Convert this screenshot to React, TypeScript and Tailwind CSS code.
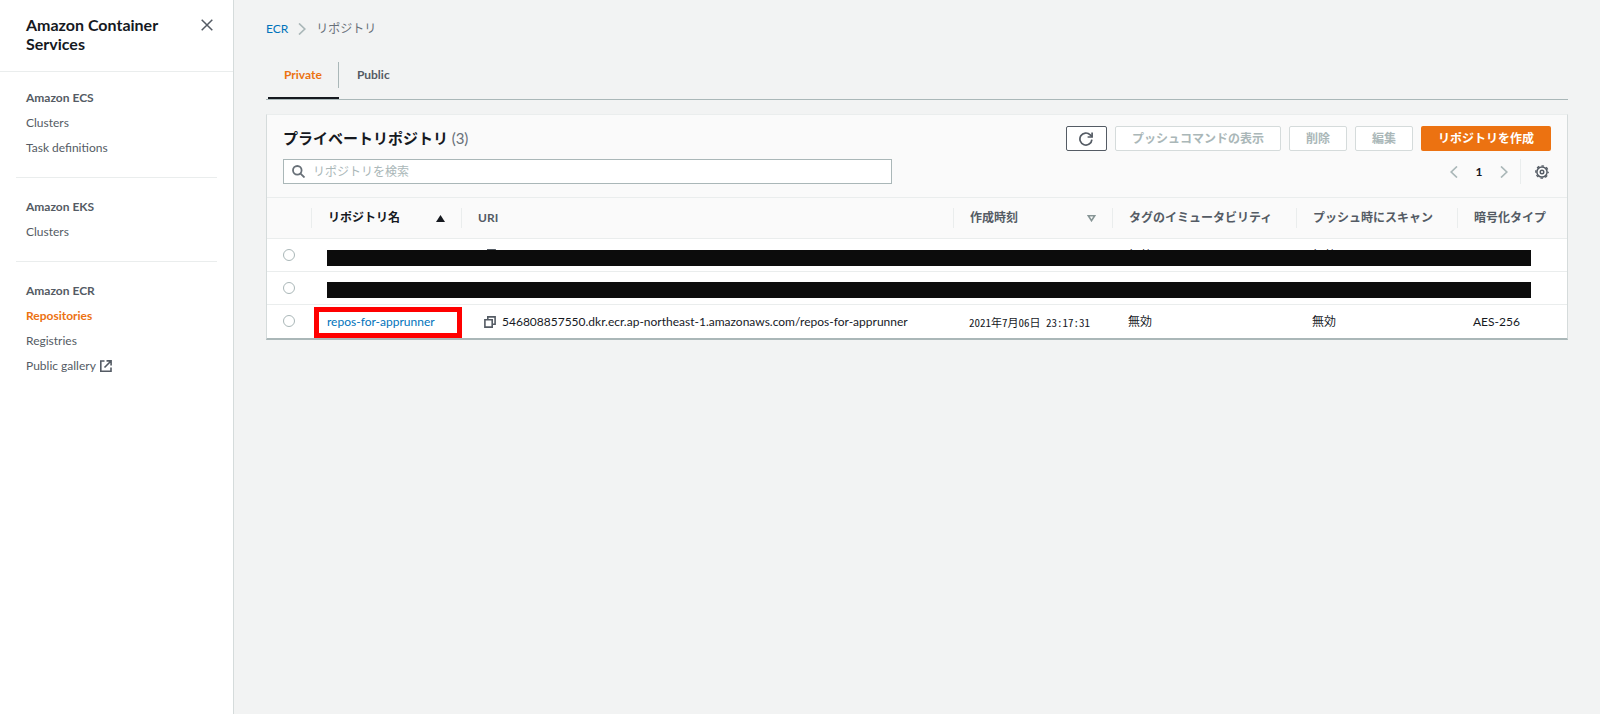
import type { ReactNode } from "react";

type NavItem = { label: string; active?: boolean; external?: boolean };
type NavSection = { title: string; items: NavItem[] };

const sections: NavSection[] = [
  { title: "Amazon ECS", items: [{ label: "Clusters" }, { label: "Task definitions" }] },
  { title: "Amazon EKS", items: [{ label: "Clusters" }] },
  {
    title: "Amazon ECR",
    items: [
      { label: "Repositories", active: true },
      { label: "Registries" },
      { label: "Public gallery", external: true },
    ],
  },
];

function CloseIcon() {
  return (
    <svg viewBox="0 0 12 12" className="size-3" fill="none" stroke="#545b64" strokeWidth="1.5" aria-hidden="true">
      <path d="M0.700 0.700l10.600 10.600M11.300 0.700L0.700 11.300" />
    </svg>
  );
}

function ExternalIcon() {
  return (
    <svg viewBox="0 0 12 12" className="size-3" fill="none" stroke="#545b64" strokeWidth="1.6" aria-hidden="true">
      <path d="M4.500 1H0.800v10.200H11V7.500M6.500 0.900h4.600v4.600M11 1L4.500 7.500" />
    </svg>
  );
}

function Chevron({ flip = false }: { flip?: boolean }) {
  return (
    <svg viewBox="0 0 8 12" className="h-3 w-2" fill="none" stroke="#aab7b8" strokeWidth="1.7" aria-hidden="true">
      <path d={flip ? "M7 0.5L1.200 6 7 11.500" : "M1 0.5L6.800 6 1 11.500"} />
    </svg>
  );
}

function SearchIcon() {
  return (
    <svg viewBox="0 0 13 13" className="size-[13px]" fill="none" stroke="#687078" strokeWidth="1.8" aria-hidden="true">
      <circle cx="5.3" cy="5.3" r="4.3" />
      <path d="M8.3 8.3l4.200 4.200" />
    </svg>
  );
}

function RefreshIcon() {
  return (
    <svg viewBox="0 0 14 14" className="size-3.5" fill="none" stroke="#545b64" strokeWidth="1.7" aria-hidden="true">
      <path d="M12.900 7.6A6 6 0 1 1 11.200 2.800L13 4.600" />
      <path d="M13.100 0.5V5H8.6" />
    </svg>
  );
}

function GearIcon() {
  return (
    <svg viewBox="0 0 14 14" className="size-3.5" fill="none" stroke="#545b64" aria-hidden="true">
      <circle cx="7" cy="7" r="5.100" strokeWidth="1.500" />
      <circle cx="7" cy="7" r="6.200" strokeWidth="1.300" strokeDasharray="2.600 2.270" strokeDashoffset="1.300" />
      <circle cx="7" cy="7" r="1.800" strokeWidth="1.400" />
    </svg>
  );
}

function CopyIcon() {
  return (
    <svg viewBox="0 0 12 12" className="size-3 shrink-0" fill="none" stroke="#545b64" strokeWidth="1.6" aria-hidden="true">
      <path d="M0.900 3.800h7.300v7.300H0.900z" />
      <path d="M3.800 3.500V0.900h7.300v7.300H8.500" />
    </svg>
  );
}

function Sidebar() {
  return (
    <aside className="w-[234px] shrink-0 border-r border-[#d5dbdb] bg-white">
      <div className="flex items-start justify-between border-b border-[#eaeded] pt-[15px] pr-5 pb-[18px] pl-[26px]">
        <h1 className="text-[16px] leading-[19px] font-bold text-[#16191f]">
          Amazon Container
          <br />
          Services
        </h1>
        <button type="button" aria-label="Close" className="pt-1">
          <CloseIcon />
        </button>
      </div>
      <nav className="divide-y divide-[#eaeded] px-4 text-[#545b64]">
        {sections.map((section) => (
          <div key={section.title} className="pt-4 pb-[17px] first:pt-[13px]">
            <h2 className="px-2.5 leading-[25px] font-bold">{section.title}</h2>
            <ul>
              {section.items.map((item) => (
                <li key={item.label} className="px-2.5">
                  <a
                    href="#"
                    className={
                      item.active
                        ? "flex items-center gap-1 leading-[25px] font-bold text-[#ec7211]"
                        : "flex items-center gap-1 leading-[25px] text-[#545b64]"
                    }
                  >
                    {item.label}
                    {item.external && <ExternalIcon />}
                  </a>
                </li>
              ))}
            </ul>
          </div>
        ))}
      </nav>
    </aside>
  );
}

function DisabledButton({ children }: { children: ReactNode }) {
  return (
    <button
      type="button"
      disabled
      className="h-[25px] rounded-xs border border-[#d5dbdb] bg-white px-4 font-bold text-[#aab7b8]"
    >
      {children}
    </button>
  );
}

function HeaderCell({ children, active = false }: { children: ReactNode; active?: boolean }) {
  return (
    <th scope="col" className={active ? "font-bold text-[#16191f]" : "font-bold text-[#545b64]"}>
      <div className="flex h-5 items-center justify-between border-l border-[#eaeded] pr-4 pl-4 whitespace-nowrap">
        {children}
      </div>
    </th>
  );
}

function RadioCell({ label }: { label: string }) {
  return (
    <td className="pl-4">
      <input
        type="radio"
        name="repository"
        aria-label={label}
        className="block size-3 appearance-none rounded-full border border-[#aab7b8] bg-white"
      />
    </td>
  );
}

export default function App() {
  return (
    <div className="flex min-h-screen bg-[#f2f3f3] font-['Lato','Noto_Sans_CJK_JP',sans-serif] text-[12px] text-[#16191f]">
      <Sidebar />
      <main className="min-w-0 flex-1 px-8 pt-5">
        <nav aria-label="Breadcrumb" className="flex h-[18px] items-center gap-2.5">
          <a href="#" className="text-[#0073bb]">ECR</a>
          <Chevron />
          <span className="text-[#687078]">リポジトリ</span>
        </nav>

        <div role="tablist" className="mt-6 flex border-b border-[#aab7b8] pl-0.5 font-bold">
          <button
            type="button"
            role="tab"
            aria-selected="true"
            className="h-[37px] border-b-2 border-[#16191f] text-[#ec7211]"
          >
            <span className="-mt-2.5 flex h-[26px] items-center border-r border-[#aab7b8] px-4">Private</span>
          </button>
          <button type="button" role="tab" aria-selected="false" className="h-[37px] text-[#545b64]">
            <span className="-mt-3 flex h-[26px] items-center px-[18px]">Public</span>
          </button>
        </div>

        <section className="mt-3.5 border border-[#d5dbdb] border-t-[#eaeded] border-b-2 border-b-[#aab7b8] bg-[#fafafa]">
          <div className="flex flex-col gap-2 px-4 pt-[11px] pb-[13px]">
            <div className="flex items-center justify-between">
              <h2 className="pb-0.5 text-[15px] leading-5 font-bold">
                プライベートリポジトリ <span className="font-normal text-[#687078]">(3)</span>
              </h2>
              <div className="flex gap-2">
                <button
                  type="button"
                  aria-label="更新"
                  className="flex h-[25px] w-[41px] items-center justify-center rounded-xs border border-[#545b64] bg-white"
                >
                  <RefreshIcon />
                </button>
                <DisabledButton>プッシュコマンドの表示</DisabledButton>
                <DisabledButton>削除</DisabledButton>
                <DisabledButton>編集</DisabledButton>
                <button type="button" className="h-[25px] rounded-xs bg-[#ec7211] px-[17px] font-bold text-white">
                  リポジトリを作成
                </button>
              </div>
            </div>
            <div className="flex items-center justify-between">
              <label className="flex h-[25px] w-[48%] items-center gap-2 border border-[#aab7b8] bg-white px-2">
                <SearchIcon />
                <input
                  type="search"
                  aria-label="リポジトリを検索"
                  placeholder="リポジトリを検索"
                  className="min-w-0 flex-1 bg-transparent outline-none placeholder:text-[#aab7b8]"
                />
              </label>
              <div className="flex items-center">
                <button type="button" aria-label="前のページ"><Chevron flip /></button>
                <button type="button" className="w-[42px] text-center font-bold">1</button>
                <button type="button" aria-label="次のページ"><Chevron /></button>
                <div className="ml-3 flex h-[25px] items-center border-l border-[#eaeded] pr-0.5 pl-3.5">
                  <button type="button" aria-label="設定"><GearIcon /></button>
                </div>
              </div>
            </div>
          </div>

          <table className="w-full table-fixed border-t border-[#eaeded] text-left">
            <colgroup>
              <col className="w-[44px]" />
              <col className="w-[150px]" />
              <col />
              <col className="w-[159px]" />
              <col className="w-[184px]" />
              <col className="w-[161px]" />
              <col className="w-[110px]" />
            </colgroup>
            <thead>
              <tr className="h-[41px]">
                <td />
                <HeaderCell active>
                  リポジトリ名
                  <svg viewBox="0 0 9 7" className="h-[7px] w-[9px]" aria-hidden="true">
                    <path d="M4.500 0L9 7H0z" fill="#16191f" />
                  </svg>
                </HeaderCell>
                <HeaderCell>URI</HeaderCell>
                <HeaderCell>
                  作成時刻
                  <svg viewBox="0 0 9 7" className="h-[7px] w-[9px]" aria-hidden="true">
                    <path d="M1.300 0.800h6.400L4.500 5.700z" fill="none" stroke="#879596" strokeWidth="1.600" />
                  </svg>
                </HeaderCell>
                <HeaderCell>タグのイミュータビリティ</HeaderCell>
                <HeaderCell>プッシュ時にスキャン</HeaderCell>
                <HeaderCell>暗号化タイプ</HeaderCell>
              </tr>
            </thead>
            <tbody className="bg-white">
              <tr className="relative h-[33px] border-t border-[#eaeded]">
                <RadioCell label="リポジトリ 1" />
                <td>
                  <div className="absolute top-2.5 right-[36px] left-[60px] h-4 bg-[#0c0c0c]" />
                </td>
                <td className="pl-[23px]"><CopyIcon /></td>
                <td />
                <td className="pt-0.5 pl-4">無効</td>
                <td className="pt-0.5 pl-4">無効</td>
                <td />
              </tr>
              <tr className="relative h-[33px] border-t border-[#eaeded]">
                <RadioCell label="リポジトリ 2" />
                <td colSpan={6}>
                  <div className="absolute top-[9px] right-[36px] left-[60px] h-4 bg-[#0c0c0c]" />
                </td>
              </tr>
              <tr className="h-[33px] border-t border-[#eaeded]">
                <RadioCell label="repos-for-apprunner" />
                <td className="relative pt-0.5 pl-4">
                  <a href="#" className="text-[#0073bb]">repos-for-apprunner</a>
                  <div className="pointer-events-none absolute top-0.5 -right-px bottom-0 left-[3px] border-[5px] border-[#ff0000]" />
                </td>
                <td className="pt-0.5 pl-[23px]">
                  <div className="flex items-center gap-1.5">
                    <button type="button" aria-label="URI をコピー"><CopyIcon /></button>
                    <span>546808857550.dkr.ecr.ap-northeast-1.amazonaws.com/repos-for-apprunner</span>
                  </div>
                </td>
                <td className="pt-0.5 pl-4 font-['Noto_Sans_Mono_CJK_JP','Noto_Sans_CJK_JP',monospace] text-[11px] whitespace-nowrap">
                  2021年7月06日 23:17:31
                </td>
                <td className="pt-0.5 pl-4">無効</td>
                <td className="pt-0.5 pl-4">無効</td>
                <td className="pt-0.5 pl-4">AES-256</td>
              </tr>
            </tbody>
          </table>
        </section>
      </main>
    </div>
  );
}
